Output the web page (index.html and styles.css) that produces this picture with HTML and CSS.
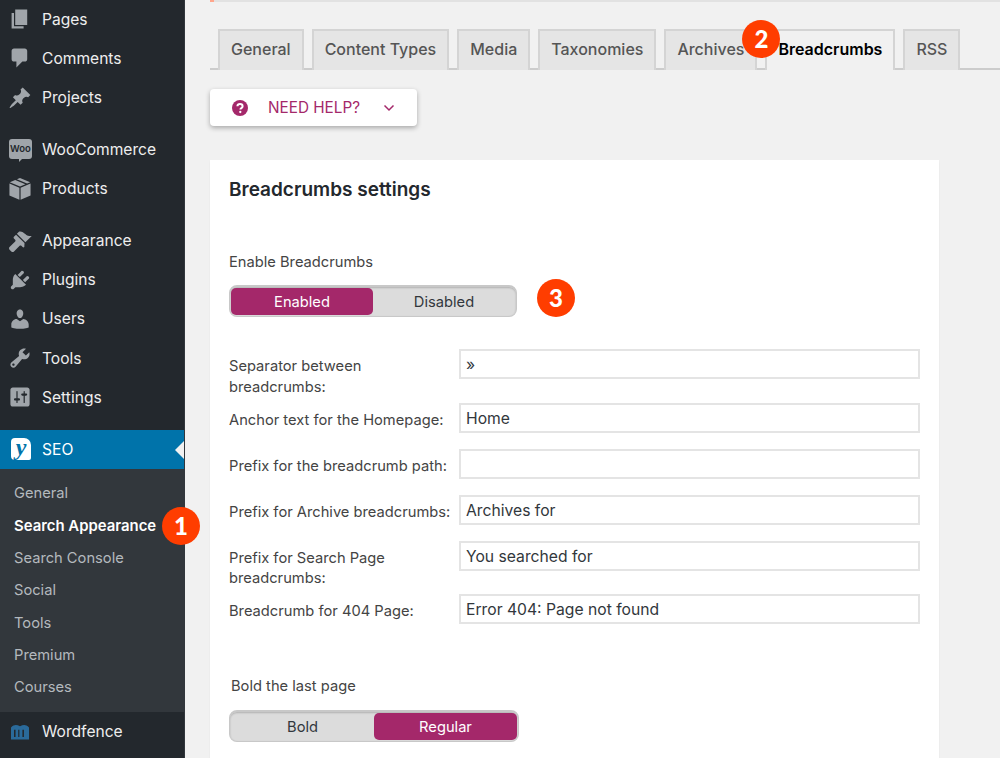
FILE: index.html
```html
<!DOCTYPE html>
<html lang="en">
  <head>
    <meta charset="UTF-8" />
    <title>Search Appearance - Breadcrumbs</title>
    <link rel="stylesheet" href="styles.css">
  </head>
  <body>
    <nav class="sidebar">
      <a class="menu-item"><svg class="icon" viewBox="0 0 20 20"><path d="M6 15V2h10v13H6zm-1 1h8v2H3V5h2v11z"/></svg>Pages</a>
      <a class="menu-item"><svg class="icon" viewBox="0 0 20 20"><path d="M5 2h9c1.100 0 2 .9 2 2v7c0 1.100-.9 2-2 2h-2l-5 5v-5H5c-1.100 0-2-.9-2-2V4c0-1.100.9-2 2-2z"/></svg>Comments</a>
      <a class="menu-item"><svg class="icon" viewBox="0 0 20 20"><path d="M10.440 3.020l1.820-1.820 6.360 6.350-1.830 1.820c-1.050-.68-2.480-.57-3.410.36l-.75.75c-.92.93-1.040 2.350-.35 3.410l-1.830 1.820-2.410-2.410-2.800 2.790c-.42.42-3.380 2.710-3.800 2.290s1.860-3.390 2.280-3.810l2.790-2.790L4.100 9.360l1.830-1.820c1.050.69 2.480.57 3.400-.36l.75-.75c.93-.92 1.050-2.350.36-3.410z"/></svg>Projects</a>
      <div class="menu-gap"></div>
      <a class="menu-item"><span class="woo-icon">Woo</span>WooCommerce</a>
      <a class="menu-item"><svg class="icon" viewBox="0 0 20 20"><path d="M10 .8l8.500 3.500-2.600 1.100L7.400 1.900zM6 2.500l8.500 3.500L10 7.900 1.500 4.300zM1.200 5.500L9.500 9v10L1.200 15.500zM18.800 5.500v10L10.500 19V9z"/></svg>Products</a>
      <div class="menu-gap"></div>
      <a class="menu-item"><svg class="icon" viewBox="0 0 20 20"><path d="M14.480 11.060L7.410 3.990l1.500-1.500c.5-.56 2.300-.47 3.510.32 1.210.8 1.430 1.280 2.910 2.100 1.180.64 2.450 1.260 4.450.85zm-.71.71L6.700 4.700 4.930 6.470c-.39.39-.39 1.020 0 1.410l1.060 1.060c.39.39.39 1.030 0 1.420L1.300 15c-.6.6-.6 1.600 0 2.200l1.500 1.500c.6.600 1.600.6 2.200 0l4.700-4.700c.39-.39 1.030-.39 1.420 0l1.060 1.060c.39.39 1.020.39 1.410 0z"/></svg>Appearance</a>
      <a class="menu-item"><svg class="icon" viewBox="0 0 20 20"><path d="M13.110 4.360L9.870 7.600 8 5.730l3.240-3.240c.35-.34 1.050-.2 1.560.32.52.51.66 1.210.31 1.550zm-8 1.770l.91-1.120 9.010 9.010-1.190.84c-.71.71-2.630 1.160-3.820 1.160H6.140L4.900 17.260c-.59.59-1.540.59-2.120 0-.59-.58-.59-1.530 0-2.120l1.240-1.240v-3.880c0-1.130.4-3.190 1.090-3.890zm7.260 3.970l3.240-3.240c.34-.35 1.040-.21 1.550.31.52.51.66 1.210.31 1.550l-3.240 3.250z"/></svg>Plugins</a>
      <a class="menu-item"><svg class="icon" viewBox="0 0 20 20"><path d="M10 9.250c-2.270 0-2.730-3.440-2.730-3.440C7 4.020 7.820 2 9.970 2c2.160 0 2.980 2.020 2.710 3.810 0 0-.41 3.440-2.680 3.440zm0 2.570L12.720 10c2.390 0 4.520 2.330 4.520 4.530v2.490s-3.650 1.130-7.240 1.130c-3.650 0-7.240-1.130-7.240-1.130v-2.490c0-2.250 1.940-4.480 4.470-4.480z"/></svg>Users</a>
      <a class="menu-item"><svg class="icon" viewBox="0 0 20 20"><path d="M16.680 9.770c-1.340 1.340-3.300 1.670-4.950.99l-5.410 6.520c-.99.99-2.590.99-3.580 0s-.99-2.590 0-3.570l6.520-5.420c-.68-1.650-.35-3.610.99-4.950 1.280-1.280 3.120-1.620 4.720-1.060l-2.890 2.890 2.820 2.820 2.860-2.870c.53 1.580.18 3.390-1.080 4.670zM3.810 16.210c.4.39 1.040.39 1.430 0 .4-.4.4-1.040 0-1.430-.39-.4-1.030-.4-1.430 0-.39.39-.39 1.030 0 1.430z"/></svg>Tools</a>
      <a class="menu-item"><svg class="icon" viewBox="0 0 20 20"><path d="M18 16V4c0-1.100-.9-2-2-2H4c-1.100 0-2 .9-2 2v12c0 1.100.9 2 2 2h12c1.100 0 2-.9 2-2zM8 11h1c.55 0 1 .45 1 1s-.45 1-1 1H8v1.500c0 .28-.22.5-.5.5s-.5-.22-.5-.5V13H6c-.55 0-1-.45-1-1s.45-1 1-1h1V5.500c0-.28.22-.5.5-.5s.5.22.5.5V11zm5-2h-1c-.55 0-1-.45-1-1s.45-1 1-1h1V5.500c0-.28.22-.5.5-.5s.5.22.5.5V7h1c.55 0 1 .45 1 1s-.45 1-1 1h-1v5.500c0 .28-.22.5-.5.5s-.5-.22-.5-.5V9z"/></svg>Settings</a>
      <div class="menu-gap"></div>
      <a class="menu-item current"><span class="yoast-icon">y</span>SEO</a>
      <div class="submenu">
        <a class="sub-item">General</a>
        <a class="sub-item active">Search Appearance<span class="badge badge-one">1</span></a>
        <a class="sub-item">Search Console</a>
        <a class="sub-item">Social</a>
        <a class="sub-item">Tools</a>
        <a class="sub-item">Premium</a>
        <a class="sub-item">Courses</a>
      </div>
      <a class="menu-item"><svg class="icon icon-wf" viewBox="0 0 20 20"><path d="M2.500 7C5 4.500 7 4.500 10 6c3-1.500 5-1.500 7.500 1v10h-15zM5 9v6h1.300V9zm3.500 0v6h1V9zm3.500 0v6h1.300V9z" fill-rule="evenodd"/></svg>Wordfence</a>
    </nav>

    <main class="main">
      <div class="topline"></div>
      <div class="tabs">
        <a class="tab">General</a>
        <a class="tab">Content Types</a>
        <a class="tab">Media</a>
        <a class="tab">Taxonomies</a>
        <a class="tab">Archives</a>
        <a class="tab active">Breadcrumbs<span class="badge badge-two">2</span></a>
        <a class="tab">RSS</a>
      </div>

      <button class="help-btn">
        <svg class="help-icon" viewBox="0 0 16 16"><circle cx="8" cy="8" r="8"/><path class="help-mark" d="M5.400 6.200C5.500 4.700 6.600 4 8 4c1.500 0 2.600.9 2.600 2.200 0 1.900-2.200 1.800-2.200 3.300" /><circle class="help-dot" cx="8.300" cy="12" r="1.150"/></svg>
        <span>NEED HELP?</span>
        <svg class="chevron" viewBox="0 0 12 8"><path d="M1.500 1.500L6 6l4.500-4.500"/></svg>
      </button>

      <section class="card">
        <h2>Breadcrumbs settings</h2>

        <div class="switch-label">Enable Breadcrumbs</div>
        <div class="switch-row">
          <div class="switch">
            <span class="switch-opt on">Enabled</span>
            <span class="switch-opt">Disabled</span>
          </div>
          <span class="badge badge-three">3</span>
        </div>

        <div class="form">
          <div class="form-row">
            <label>Separator between breadcrumbs:</label>
            <input type="text" value="»">
          </div>
          <div class="form-row">
            <label>Anchor text for the Homepage:</label>
            <input type="text" value="Home">
          </div>
          <div class="form-row">
            <label>Prefix for the breadcrumb path:</label>
            <input type="text" value="">
          </div>
          <div class="form-row">
            <label>Prefix for Archive breadcrumbs:</label>
            <input type="text" value="Archives for">
          </div>
          <div class="form-row">
            <label>Prefix for Search Page breadcrumbs:</label>
            <input type="text" value="You searched for">
          </div>
          <div class="form-row">
            <label>Breadcrumb for 404 Page:</label>
            <input type="text" value="Error 404: Page not found">
          </div>
        </div>

        <div class="switch-label second">Bold the last page</div>
        <div class="switch wide">
          <span class="switch-opt">Bold</span>
          <span class="switch-opt on">Regular</span>
        </div>
      </section>
    </main>
  </body>
</html>
```

FILE: styles.css
```css
*,
*::after,
*::before {
  box-sizing: border-box;
}

html,
body {
  height: 758px;
  overflow: hidden;
}

body {
  margin: 0;
  display: flex;
  background-color: #f1f1f1;
  font-family: Inter, "Liberation Sans", sans-serif;
  color: #444;
}

/* sidebar */
.sidebar {
  width: 185px;
  height: 759px;
  flex: none;
  margin-top: -0.400px;
  background-color: #23282d;
  border-right: 1px solid #32373c;
}

.menu-item {
  display: flex;
  align-items: center;
  height: 39.200px;
  padding-left: 8px;
  font-size: 15.600px;
  color: #eee;
}

.menu-gap {
  height: 12.700px;
}

.icon {
  width: 24px;
  height: 24px;
  margin-right: 10px;
  fill: #a0a5aa;
  flex: none;
}

.icon-wf {
  fill: #2a6a9a;
}

.woo-icon {
  position: relative;
  width: 23px;
  height: 20px;
  margin: 0 10px 0 1px;
  border-radius: 3px;
  background-color: #a0a5aa;
  color: #23282d;
  font-size: 9.500px;
  font-weight: 600;
  line-height: 20px;
  text-align: center;
  flex: none;
}

.woo-icon::after {
  content: "";
  position: absolute;
  left: 10px;
  bottom: -3px;
  border-top: 3px solid #a0a5aa;
  border-right: 3px solid transparent;
}

.yoast-icon {
  width: 20px;
  height: 22px;
  margin: 0 11px 0 3px;
  border-radius: 4px 7px 2px 4px;
  background-color: #fff;
  color: #0073aa;
  font-family: "Liberation Serif", serif;
  font-size: 24px;
  font-style: italic;
  font-weight: 700;
  line-height: 19px;
  text-align: center;
  flex: none;
}

.menu-item.current {
  position: relative;
  background-color: #0073aa;
  color: #fff;
}

.menu-item.current::after {
  content: "";
  position: absolute;
  right: 0;
  top: 11px;
  border: 9px solid transparent;
  border-right-color: #f1f1f1;
  border-left-width: 0;
}

.submenu {
  background-color: #32373c;
  padding: 8.500px 0;
}

.sub-item {
  display: flex;
  align-items: center;
  position: relative;
  height: 32.300px;
  padding-left: 14px;
  font-size: 14.700px;
  color: #b4b9be;
}

.sub-item.active {
  color: #fff;
  font-size: 14.900px;
  font-weight: 600;
}

/* numbered markers on top of the screenshot */
.badge {
  position: absolute;
  width: 38px;
  height: 38px;
  border-radius: 50%;
  background-color: #ff3d00;
  color: #fff;
  font-family: Lato, Inter, sans-serif;
  font-size: 24px;
  font-weight: 900;
  line-height: 38px;
  text-align: center;
}

.badge-one {
  left: 162px;
  top: -3px;
  z-index: 2;
}

.badge-two {
  left: -25px;
  top: -11px;
}

.badge-three {
  position: static;
  margin-left: 20px;
  margin-top: -6px;
}

/* main column */
.main {
  flex: 1;
  min-width: 0;
  padding-left: 25px;
  position: relative;
}

.topline {
  height: 2px;
  background-color: #e2e2e2;
  border-left: 4px solid #ffa68c;
}

.tabs {
  display: flex;
  gap: 8px;
  height: 68px;
  padding: 27px 0 0 8px;
  border-bottom: 2px solid #ccc;
}

.tab {
  position: relative;
  height: 41px;
  padding: 0 11px;
  border: 2px solid #d4d4d4;
  border-bottom: 0;
  background-color: #e5e5e5;
  font-size: 16px;
  font-weight: 500;
  line-height: 37px;
  color: #555;
}

.tab.active {
  background-color: #f1f1f1;
  font-weight: 600;
  color: #000;
}

.help-btn {
  display: flex;
  align-items: center;
  width: 207px;
  height: 37px;
  margin-top: 19px;
  padding: 0 0 0 22px;
  border: 0;
  border-radius: 4px;
  background-color: #fff;
  box-shadow: 0 2px 5px rgba(0, 0, 0, 0.3);
  color: #a4286a;
  font-family: inherit;
  font-size: 15.300px;
}

.help-icon {
  width: 16px;
  height: 16px;
  margin-right: 20px;
  fill: #a4286a;
}

.help-mark {
  fill: none;
  stroke: #fff;
  stroke-width: 2;
}

.help-dot {
  fill: #fff;
}

.chevron {
  width: 12px;
  height: 8px;
  margin-left: 23px;
  fill: none;
  stroke: #a4286a;
  stroke-width: 1.500;
}

.card {
  width: 729px;
  height: 640px;
  margin-top: 34px;
  padding: 19px 19px 0;
  background-color: #fff;
  box-shadow: 0 1px 2px rgba(0, 0, 0, 0.05);
}

.card h2 {
  margin: 0;
  font-size: 19px;
  font-weight: 600;
  line-height: 22px;
  color: #23282d;
}

.switch-label {
  margin-top: 51px;
  font-size: 14.700px;
  line-height: 20px;
}

.switch-label.second {
  margin: 41px 0 0 2px;
}

.switch-row {
  display: flex;
  align-items: flex-start;
  margin-top: 13px;
}

.switch {
  display: flex;
  width: 288px;
  height: 32px;
  padding: 1px;
  border: 1px solid #c8c8c8;
  border-top-width: 2px;
  border-radius: 8px;
  background-color: #dcdcdc;
  box-shadow: inset 0 1px 2px rgba(0, 0, 0, 0.2);
  font-size: 14.700px;
}

.switch.wide {
  width: 290px;
  margin-top: 14px;
}

.switch-opt {
  flex: 1;
  border-radius: 5px;
  line-height: 28px;
  text-align: center;
  color: #32373c;
}

.switch-opt.on {
  background-color: #a4286a;
  color: #fff;
}

.form {
  margin-top: 32px;
}

.form-row {
  display: flex;
  margin-bottom: 5px;
}

.form-row label {
  width: 230px;
  padding: 7px 8px 0 0;
  flex: none;
  font-size: 14.700px;
  line-height: 20.750px;
}

.form-row input {
  width: 461px;
  height: 30px;
  margin-bottom: 11px;
  padding: 1px 5px 0;
  border: 2px solid #e4e4e4;
  background-color: #fff;
  font-family: inherit;
  font-size: 15.700px;
  color: #32373c;
}
```
